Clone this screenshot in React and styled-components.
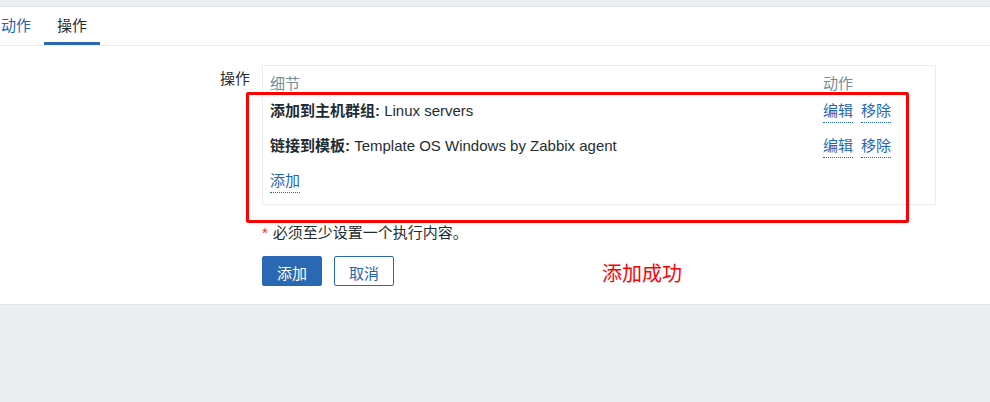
import React from 'react'
import styled, { createGlobalStyle } from 'styled-components'

const GlobalStyle = createGlobalStyle`
  html, body {
    margin: 0;
    padding: 0;
    background: #ebeef1;
    font-family: "Liberation Sans", "Noto Sans CJK SC", Arial, sans-serif;
    color: #1f2c33;
    font-size: 15px;
  }
`

const Page = styled.div`
  width: 990px;
  height: 402px;
  overflow: hidden;
  padding-top: 6px;
  box-sizing: border-box;
`

const Panel = styled.div`
  background: #fff;
  border-top: 1px solid #dfe4e7;
  border-bottom: 1px solid #dfe4e7;
  padding-bottom: 17px;
`

const TabBar = styled.div`
  display: flex;
  height: 38px;
  border-bottom: 1px solid #ebeef1;
  margin-left: -12px;
`

const Tab = styled.div`
  padding: 0 13px;
  display: flex;
  align-items: center;
  color: ${p => (p.$active ? '#1f2c33' : '#1f65b4')};
  border-bottom: 3px solid ${p => (p.$active ? '#2b68b3' : 'transparent')};
  box-sizing: border-box;
`

const FormRow = styled.div`
  display: grid;
  grid-template-columns: 250px 674px;
  column-gap: 12px;
  margin-top: 19px;
`

const Label = styled.div`
  text-align: right;
  padding-top: 4px;
  line-height: 20px;
`

const Field = styled.div``

const TableWrap = styled.div`
  position: relative;
`

const TableBox = styled.div`
  border: 1px solid #ebeef1;
  padding: 0 7px 5px;
`

const Row = styled.div`
  display: grid;
  grid-template-columns: 1fr 105px;
  line-height: 20px;
  padding: ${p => (p.$head ? '8px 0 0' : '7px 0')};
  height: ${p => (p.$head ? '28px' : '35px')};
  box-sizing: border-box;
  color: ${p => (p.$head ? '#768d99' : '#1f2c33')};
`

const Bold = styled.b`
  font-weight: bold;
`

const Actions = styled.div`
  display: flex;
  gap: 8px;
`

const Link = styled.span`
  color: #1f65b4;
  border-bottom: 1px dotted #1f65b4;
  line-height: 20px;
  height: 22px;
  display: inline-block;
  box-sizing: border-box;
`

const Highlight = styled.div`
  position: absolute;
  left: -16px;
  top: 27px;
  width: 663px;
  height: 131px;
  border: 3px solid #ff0000;
  border-radius: 2px;
  box-sizing: border-box;
  pointer-events: none;
`

const Note = styled.div`
  margin-top: 18px;
  line-height: 20px;
`

const Star = styled.span`
  color: #e33734;
  margin-right: 5px;
`

const Buttons = styled.div`
  display: flex;
  align-items: center;
  gap: 12px;
  margin-top: 12px;
`

const Button = styled.div`
  width: 60px;
  height: 30px;
  box-sizing: border-box;
  display: flex;
  align-items: center;
  justify-content: center;
  border-radius: 2px;
  border: 1px solid #2b68b3;
  background: ${p => (p.$primary ? '#2b68b3' : '#fff')};
  color: ${p => (p.$primary ? '#fff' : '#1f65b4')};
  padding-top: 2px;
`

const Success = styled.div`
  margin-left: 196px;
  color: #ff0000;
  font-size: 20px;
  padding-top: 3px;
`

export default function App() {
  return (
    <Page>
      <GlobalStyle />
      <Panel>
        <TabBar>
          <Tab>动作</Tab>
          <Tab $active>操作</Tab>
        </TabBar>
        <FormRow>
          <Label>操作</Label>
          <Field>
            <TableWrap>
              <TableBox>
                <Row $head>
                  <span>细节</span>
                  <span>动作</span>
                </Row>
                <Row>
                  <span><Bold>添加到主机群组:</Bold> Linux servers</span>
                  <Actions><Link>编辑</Link><Link>移除</Link></Actions>
                </Row>
                <Row>
                  <span><Bold>链接到模板:</Bold> Template OS Windows by Zabbix agent</span>
                  <Actions><Link>编辑</Link><Link>移除</Link></Actions>
                </Row>
                <Row>
                  <span><Link>添加</Link></span>
                </Row>
              </TableBox>
              <Highlight />
            </TableWrap>
            <Note><Star>*</Star>必须至少设置一个执行内容。</Note>
            <Buttons>
              <Button $primary>添加</Button>
              <Button>取消</Button>
              <Success>添加成功</Success>
            </Buttons>
          </Field>
        </FormRow>
      </Panel>
    </Page>
  )
}
